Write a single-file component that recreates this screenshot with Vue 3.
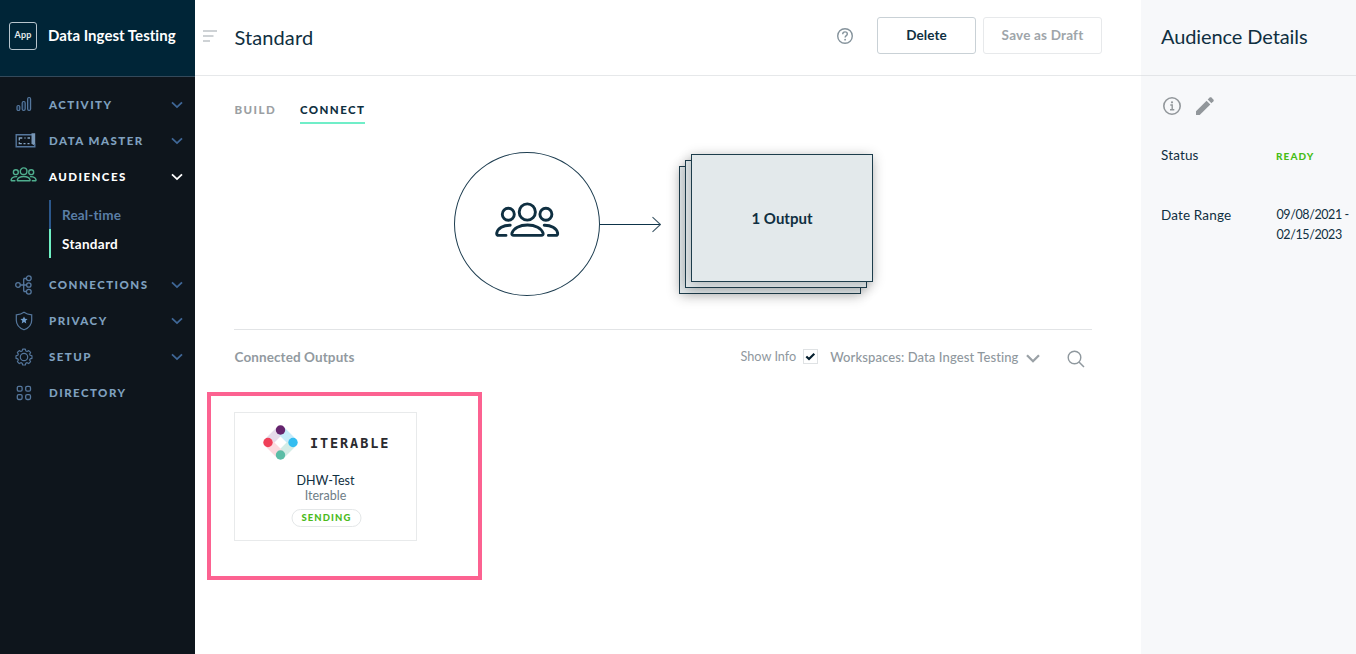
<script setup>
const nav = [
  { id: 'activity', label: 'ACTIVITY', chevron: true },
  { id: 'data', label: 'DATA MASTER', chevron: true },
  { id: 'audiences', label: 'AUDIENCES', chevron: true, active: true, children: [
    { label: 'Real-time' },
    { label: 'Standard', active: true }
  ] },
  { id: 'connections', label: 'CONNECTIONS', chevron: true },
  { id: 'privacy', label: 'PRIVACY', chevron: true },
  { id: 'setup', label: 'SETUP', chevron: true },
  { id: 'directory', label: 'DIRECTORY' }
]
</script>

<template>
  <div class="app">
    <svg class="defs" width="0" height="0">
      <symbol id="people" viewBox="0 0 66 36">
        <g fill="none" stroke="currentColor" stroke-linecap="round">
          <circle cx="33.3" cy="10" r="8.1" />
          <circle cx="14.3" cy="12.3" r="6" />
          <circle cx="51.9" cy="12.3" r="6" />
          <path d="M19.8 33.4h27.4c1.7 0 2.3-.9 1.8-2.4-1.6-4.8-7.6-8-15.5-8s-13.9 3.2-15.5 8c-.5 1.5.1 2.4 1.8 2.4z" />
          <path d="M16.2 23.2C9.2 23 3.9 26.600 2.8 30.8c-.4 1.7.4 2.6 2 2.600h7.200" />
          <path d="M50.2 23.2c7-.2 12.3 3.4 13.4 7.6.4 1.7-.4 2.6-2 2.600h-7.200" />
        </g>
      </symbol>
    </svg>

    <aside class="sidebar">
      <div class="brand">
        <div class="badge">App</div>
        <div class="brand-name">Data Ingest Testing</div>
      </div>
      <nav class="nav">
        <template v-for="item in nav" :key="item.id">
          <div class="nav-row" :class="{ active: item.active }">
            <div class="nav-icon">
              <svg v-if="item.id === 'activity'" class="bars" width="16" height="16" viewBox="0 0 16 16">
                <g fill="#12263d" stroke="currentColor" stroke-width="1.2">
                  <rect x="1" y="9.5" width="2.8" height="5" rx="1.3" />
                  <rect x="6.2" y="5.5" width="3" height="9" rx="1.4" />
                  <rect x="11.6" y="1.5" width="3" height="13" rx="1.4" />
                </g>
              </svg>
              <svg v-else-if="item.id === 'data'" class="ticket" width="21" height="15" viewBox="0 0 21 15">
                <path d="M17 1.7H1.2v12h18.6v-3" fill="none" stroke="currentColor" stroke-width="1.4" />
                <path d="M4.300 7.500V5h3M9.500 5h1M12.500 5h2.500M4.300 9.200v1.500h2.500M8.500 10.700h2M12.500 10.700h2" fill="none" stroke="#86a5c4" stroke-width="1.300" />
                <path d="M16.500 .3h3.700v10l-1.800 2-1.900-2z" fill="#7896b5" />
              </svg>
              <svg v-else-if="item.id === 'audiences'" class="people-small" width="27" height="15"><use href="#people" /></svg>
              <svg v-else-if="item.id === 'connections'" width="18" height="20" viewBox="0 0 18 20">
                <g fill="none" stroke="currentColor" stroke-width="1.3">
                  <path d="M5.5 10h6M8.7 3.500v13M8.700 3.500h2.500M8.700 16.500h2.500" />
                  <circle cx="3" cy="10" r="2.3" />
                  <circle cx="13.8" cy="3.3" r="2.4" />
                  <circle cx="13.8" cy="10" r="2.2" />
                  <circle cx="13.8" cy="16.7" r="2.4" />
                </g>
              </svg>
              <svg v-else-if="item.id === 'privacy'" width="18" height="20" viewBox="0 0 18 20">
                <path d="M9 1.2C6.7 3 4 3.600 1.300 3.800v5.400c0 4.700 3.200 7.800 7.700 9.600 4.500-1.800 7.700-4.900 7.700-9.600V3.800C14 3.600 11.300 3 9 1.200z" fill="none" stroke="currentColor" stroke-width="1.200" />
                <path d="M9 5.500l1.100 2.300 2.500.3-1.900 1.700.6 2.600L9 11.100l-2.300 1.300.6-2.600-1.900-1.700 2.500-.3z" fill="#6f9ccb" />
              </svg>
              <svg v-else-if="item.id === 'setup'" width="18" height="18" viewBox="0 0 18 18">
                <g fill="none" stroke="currentColor" stroke-width="1.200" stroke-linejoin="round">
                  <path d="M7.600 1.200h2.800l.5 1.900 1.300.6 1.700-1 2 2-1 1.700.5 1.200 1.900.5v2.800l-1.900.5-.5 1.200 1 1.700-2 2-1.700-1-1.300.6-.5 1.900H7.600l-.5-1.900-1.300-.6-1.700 1-2-2 1-1.700-.5-1.200-1.900-.5V8.100l1.900-.5.5-1.200-1-1.700 2-2 1.700 1 1.300-.6z" transform="translate(.35 -.05) scale(.96)" />
                  <circle cx="9" cy="9" r="3.700" />
                </g>
              </svg>
              <svg v-else width="16" height="16" viewBox="0 0 16 16">
                <g fill="none" stroke="currentColor" stroke-width="1.300">
                  <rect x="1.300" y="1.300" width="4.800" height="4.800" rx="1.400" />
                  <rect x="9.700" y="1.300" width="4.800" height="4.800" rx="1.400" />
                  <rect x="1.300" y="9.700" width="4.800" height="4.800" rx="1.400" />
                  <rect x="9.700" y="9.700" width="4.800" height="4.800" rx="1.400" />
                </g>
              </svg>
            </div>
            <span class="nav-label">{{ item.label }}</span>
            <svg v-if="item.chevron" class="nav-chevron" width="12" height="8" viewBox="0 0 12 8">
              <path d="M1 1.300l5 4.800 5-4.800" fill="none" stroke="currentColor" stroke-width="1.800" />
            </svg>
          </div>
          <div v-if="item.children" class="subnav">
            <div v-for="c in item.children" :key="c.label" class="sub" :class="{ on: c.active }">{{ c.label }}</div>
          </div>
        </template>
      </nav>
    </aside>

    <main class="main">
      <header class="head">
        <svg class="menu" width="14" height="12" viewBox="0 0 14 12">
          <path d="M0 1h14M0 6h10.500M0 11h7" stroke="#bfc4c8" stroke-width="1.500" />
        </svg>
        <h1 class="title">Standard</h1>
        <svg class="help" width="18" height="18" viewBox="0 0 18 18">
          <circle cx="9" cy="9" r="7.300" fill="none" stroke="#85939c" stroke-width="1.400" />
          <path d="M6.700 7.200c0-1.500 1-2.300 2.300-2.300s2.300.8 2.300 2c0 1.700-2.200 1.700-2.200 3.600" fill="none" stroke="#85939c" stroke-width="1.400" />
          <circle cx="9.100" cy="12.700" r=".9" fill="#85939c" />
        </svg>
        <button class="btn delete">Delete</button>
        <button class="btn draft">Save as Draft</button>
      </header>

      <div class="tabs">
        <div class="tab">BUILD</div>
        <div class="tab current">CONNECT</div>
      </div>

      <section class="flow">
        <div class="source"><svg class="people-large" width="66" height="36"><use href="#people" /></svg></div>
        <svg class="arrow" width="61" height="18" viewBox="0 0 61 18">
          <path d="M0 9.500h60.500" stroke="#0d3349" stroke-width="1.100" />
          <path d="M52.500 2.200l8 7.300-8 7.300" fill="none" stroke="#3c5666" stroke-width="1.100" />
        </svg>
        <div class="stack">
          <div class="sheet third"></div>
          <div class="sheet second"></div>
          <div class="sheet first">1 Output</div>
        </div>
      </section>

      <section class="toolbar">
        <h2 class="outputs">Connected Outputs</h2>
        <span class="show">Show Info</span>
        <span class="check">
          <svg width="11" height="9" viewBox="0 0 11 9"><path d="M1.300 4.500l2.700 2.500 5.300-5.200" fill="none" stroke="#06202f" stroke-width="2.200" /></svg>
        </span>
        <span class="workspace">Workspaces: Data Ingest Testing</span>
        <svg class="drop" width="14" height="9" viewBox="0 0 14 9"><path d="M1 1.200l6 6 6-6" fill="none" stroke="#9aa1a6" stroke-width="2.300" /></svg>
        <svg class="search" width="18" height="18" viewBox="0 0 18 18">
          <circle cx="7.500" cy="7.500" r="6.300" fill="none" stroke="#8f989e" stroke-width="1.400" />
          <path d="M12 12l5 5" stroke="#8f989e" stroke-width="1.500" />
        </svg>
      </section>

      <div class="highlight">
        <article class="card">
          <div class="logo">
            <svg width="35" height="35" viewBox="0 0 35 35">
              <g stroke-width="9" fill="none">
                <path d="M5 17.500L17.500 5" stroke="#e6dbea" />
                <path d="M17.500 5L30 17.500" stroke="#c5ebfb" />
                <path d="M30 17.500L17.500 30" stroke="#d3ece6" />
                <path d="M17.500 30L5 17.500" stroke="#fcdadf" />
              </g>
              <circle cx="17.500" cy="5" r="4.700" fill="#65246d" />
              <circle cx="30" cy="17.500" r="4.700" fill="#33bdf0" />
              <circle cx="17.500" cy="30" r="4.700" fill="#5abda6" />
              <circle cx="5" cy="17.500" r="4.700" fill="#ef3f58" />
            </svg>
            <span class="word">ITERABLE</span>
          </div>
          <div class="name">DHW-Test</div>
          <div class="kind">Iterable</div>
          <div class="pill">SENDING</div>
        </article>
      </div>
    </main>

    <aside class="details">
      <div class="details-head">Audience Details</div>
      <div class="tools">
        <svg width="20" height="20" viewBox="0 0 20 20">
          <circle cx="10" cy="10" r="8.200" fill="none" stroke="#92979b" stroke-width="1.600" />
          <path d="M8.300 9h1.900v4.700M8 13.800h4.300" fill="none" stroke="#92979b" stroke-width="1.400" />
          <circle cx="10" cy="6.300" r="1.100" fill="#92979b" />
        </svg>
        <svg class="pencil" width="18" height="18" viewBox="0 0 18 18" fill="#92979b">
          <path d="M0 14.300L10.600 3.700l3.700 3.700L3.700 18H0z" />
          <path d="M11.700 2.600l2-2c.5-.5 1.200-.5 1.700 0l2 2c.5.5.5 1.200 0 1.700l-2 2z" />
        </svg>
      </div>
      <dl class="facts">
        <dt>Status</dt>
        <dd class="ready">READY</dd>
        <dt>Date Range</dt>
        <dd class="dates">09/08/2021 -<br />02/15/2023</dd>
      </dl>
    </aside>
  </div>
</template>

<style>
body { background: #fff; }
</style>

<style scoped>
* { box-sizing: border-box; }
.app {
  display: grid;
  grid-template-columns: 195px 946px 215px;
  height: 654px;
  overflow: hidden;
  font-family: Lato, "Liberation Sans", sans-serif;
  font-variant-ligatures: none;
  color: #0f2f41;
}
.defs { position: absolute; }
svg { display: block; flex: none; }

.sidebar { background: #0e151c; }
.brand {
  display: flex;
  align-items: center;
  height: 77px;
  padding: 0 0 4px 9px;
  background: #002537;
  border-bottom: 1px solid #33495a;
}
.badge {
  width: 28px;
  height: 28px;
  border: 1px solid #b8c5cd;
  border-radius: 3px;
  color: #e3e9ec;
  font-size: 9px;
  font-weight: 700;
  line-height: 24px;
  letter-spacing: .2px;
  text-align: center;
}
.brand-name { margin-left: 11px; padding-bottom: 2px; color: #fff; font-size: 15px; font-weight: 700; line-height: 20px; letter-spacing: .03px; }
.nav { padding-top: 10px; }
.nav-row { display: flex; align-items: center; height: 36px; color: #55779d; }
.nav-icon { display: flex; justify-content: center; flex: none; width: 47px; }
.bars { margin-bottom: 2px; }
.ticket { margin: 0 0 2px 4px; }
.nav-label { flex: 1; padding: 0 0 2px 2px; color: #7fa0bf; font-size: 11.5px; font-weight: 900; letter-spacing: 1.45px; }
.nav-chevron { margin-right: 12px; color: #3f6797; }
.people-small { margin: 0 1px 5px 0; color: #4fae8e; stroke-width: 3.4px; }
.people-large { stroke-width: 2.9px; }
.active .nav-label, .active .nav-chevron { color: #fff; }
.subnav { padding: 5px 0 9px 49px; }
.sub {
  height: 29px;
  padding-left: 11px;
  border-left: 2px solid #2b578b;
  color: #5a7ea6;
  font-size: 13.5px;
  font-weight: 700;
  line-height: 31px;
  letter-spacing: .15px;
}
.sub.on { border-color: #6ff0c3; color: #fff; letter-spacing: .3px; }

.head {
  display: flex;
  align-items: center;
  height: 76px;
  padding: 0 39px 4px 8px;
  border-bottom: 1px solid #e6e8ea;
}
.menu { margin-top: 1px; }
.title { flex: 1; margin: 3px 0 0 17.5px; font-size: 20px; font-weight: 400; line-height: 24px; letter-spacing: .1px; }
.help { margin-right: 23.5px; }
.btn {
  height: 37px;
  padding: 0 0 1px;
  background: #fff;
  border-radius: 3px;
  font-family: inherit;
  font-weight: 700;
}
.delete { width: 99px; border: 1px solid #c9d1d6; color: #0f2f41; font-size: 13.5px; letter-spacing: .1px; }
.draft { width: 119px; margin-left: 7px; border: 1px solid #e7e9eb; color: #9ea5aa; font-size: 13.5px; letter-spacing: .2px; }

.tabs { display: flex; gap: 24px; height: 48px; padding: 24px 0 0 39.6px; }
.tab { color: #9b9fa3; font-size: 11.5px; font-weight: 900; line-height: 19px; letter-spacing: 1.4px; height: 24px; }
.current { border-bottom: 2px solid #70eec8; color: #0f2f41; }

.flow { display: flex; height: 205px; margin: 0 49px 0 39px; padding: 28px 0 0 220px; }
.source {
  display: flex;
  align-items: center;
  justify-content: center;
  flex: none;
  width: 146px;
  height: 144px;
  padding-bottom: 8px;
  border: 1px solid #1d3d50;
  border-radius: 50%;
}
.arrow { margin-top: 63px; }
.stack { position: relative; width: 194px; height: 140px; margin: 2px 0 0 18px; }
.sheet {
  position: absolute;
  width: 182px;
  height: 128px;
  border: 1px solid #1d3d4c;
  background: #e3e9eb;
  box-shadow: 0 2px 12px rgba(0, 0, 0, .24);
}
.third { left: 0; top: 12px; }
.second { left: 6px; top: 6px; }
.first { left: 12px; top: 0; font-size: 15px; font-weight: 700; line-height: 126px; text-align: center; }

.toolbar {
  display: flex;
  align-items: center;
  height: 63px;
  margin: 0 49px 0 39px;
  padding: 0 7.5px 8px 0;
  border-top: 1px solid #e2e4e6;
  color: #8f989e;
}
.outputs { flex: 1; margin: 0; padding: 0 0 1px .5px; font-size: 13.5px; font-weight: 700; letter-spacing: .1px; color: #929a9f; }
.show { padding-bottom: 2px; font-size: 12.7px; }
.check {
  display: flex;
  align-items: center;
  justify-content: center;
  width: 15px;
  height: 15px;
  margin: 0 12px 1px 7px;
  border: 1px solid #dfe2e4;
}
.workspace { font-size: 13px; font-weight: 500; letter-spacing: .1px; }
.drop { margin: 2px 27px 0 7px; }
.search { margin-top: 3px; }

.highlight { width: 275px; height: 188px; margin-left: 12px; padding: 16px 23px; border: 4px solid #fc6291; }
.card { width: 183px; height: 129px; padding-top: 12px; border: 1px solid #e8eaeb; text-align: center; }
.logo { display: flex; align-items: center; padding-left: 28px; }
.word {
  margin-left: 12px;
  color: #2a2a2e;
  font-family: "DejaVu Sans Mono", monospace;
  font-size: 13.5px;
  font-weight: 700;
  line-height: 20px;
  letter-spacing: 1.9px;
}
.name { margin-top: 13px; font-size: 12.5px; line-height: 15px; }
.kind { color: #6e7d87; font-size: 12.5px; line-height: 15px; }
.pill {
  width: 70px;
  height: 18px;
  margin: 6px auto 0;
  padding-left: 1px;
  border: 1px solid #e4e7e8;
  border-radius: 9px;
  color: #4bbb1c;
  font-size: 9.5px;
  font-weight: 900;
  line-height: 16px;
  letter-spacing: 1.1px;
  transform: translateX(.5px);
}

.details { background: #f7f8fa; }
.details-head { height: 76px; padding: 24px 0 0 20px; border-bottom: 1px solid #e3e5e8; font-size: 20px; line-height: 24px; letter-spacing: -.1px; }
.tools { display: flex; align-items: center; padding: 20px 0 0 21px; }
.pencil { margin-left: 14px; }
.facts { display: grid; grid-template-columns: 115px 1fr; row-gap: 40px; margin: 29px 0 0 20px; font-size: 13.5px; line-height: 20px; }
dt { letter-spacing: .15px; }
dd { margin: 0; }
.ready { padding-top: 2px; color: #47bd16; font-size: 10px; font-weight: 900; line-height: 18px; letter-spacing: 1.1px; }
.dates { padding-left: .5px; font-size: 12.5px; letter-spacing: -.4px; white-space: nowrap; }
</style>
